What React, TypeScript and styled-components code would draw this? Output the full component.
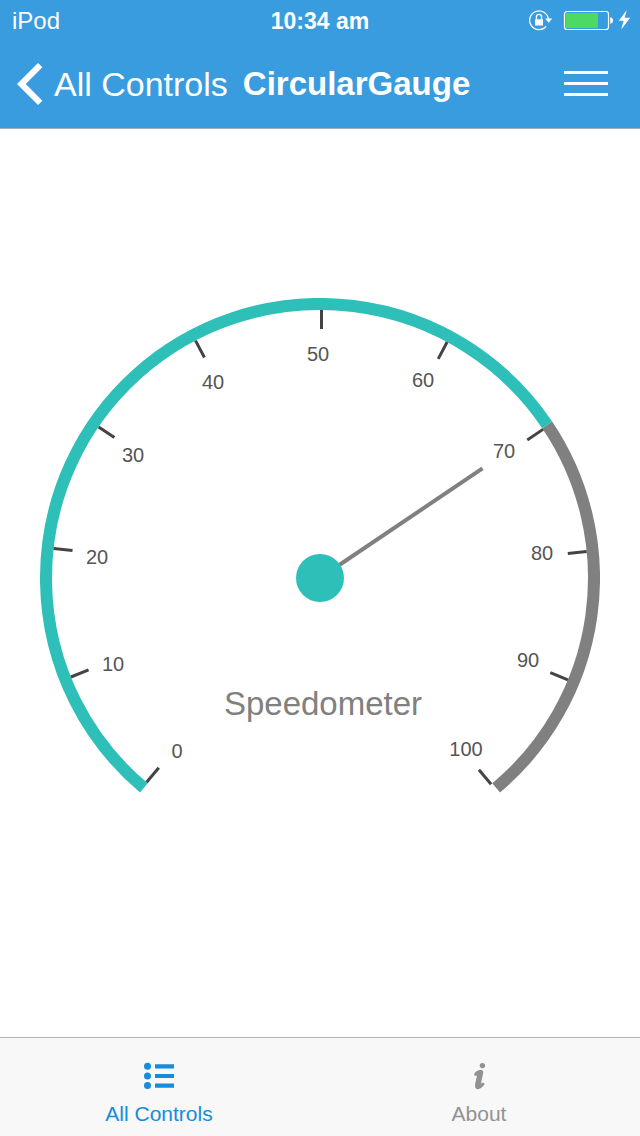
import React from 'react';
import styled, { createGlobalStyle } from 'styled-components';

const GlobalStyle = createGlobalStyle`
  * { box-sizing: border-box; }
  body {
    margin: 0;
    background: #fff;
    font-family: "Liberation Sans", Arial, sans-serif;
  }
`;

const Page = styled.div`
  min-height: 100vh;
  display: flex;
  flex-direction: column;
`;

const Header = styled.header`
  background: #389cdf;
  color: #fff;
  border-bottom: 1px solid #a6adb2;
`;

const StatusBar = styled.div`
  display: grid;
  grid-template-columns: 1fr auto 1fr;
  align-items: center;
  height: 40px;
  padding: 2px 8px 0;
  font-size: 24px;
  line-height: 28px;
`;

const Device = styled.span`
  padding-left: 4px;
`;

const Clock = styled.time`
  font-size: 23px;
  font-weight: bold;
`;

const StatusIcons = styled.div`
  display: flex;
  justify-content: flex-end;
`;

const NavBar = styled.nav`
  display: flex;
  align-items: center;
  height: 88px;
  padding: 0 32px 0 16px;
`;

const BackButton = styled.button`
  display: flex;
  align-items: center;
  gap: 10px;
  padding: 0;
  border: 0;
  background: none;
  color: inherit;
  font: inherit;
  font-size: 34px;
  line-height: 44px;
  white-space: nowrap;
`;

const Title = styled.h1`
  flex: 1;
  margin: 0 0 0 15px;
  font-size: 33px;
  line-height: 44px;
  font-weight: bold;
`;

const MenuButton = styled.button`
  display: flex;
  flex-direction: column;
  gap: 8px;
  width: 44px;
  padding: 0 0 1px;
  border: 0;
  background: none;
`;

const MenuBar = styled.span`
  height: 3px;
  background: #fff;
`;

const Main = styled.main`
  flex: 1;
  display: flex;
  align-items: center;
  justify-content: center;
  padding: 0 40px 10px;
`;

const GaugeSvg = styled.svg`
  display: block;
  width: 100%;
  max-width: 720px;
`;

const GaugeLabel = styled.text`
  font-size: 20px;
  fill: #555;
  text-anchor: middle;
`;

const GaugeTitle = styled.text`
  font-size: 33px;
  fill: #808080;
  text-anchor: middle;
`;

const TabBar = styled.nav`
  display: grid;
  grid-template-columns: 1fr 1fr;
  height: 99px;
  background: #f8f8f8;
  border-top: 1px solid #b2b2b2;
`;

const Tab = styled.button<{ $active?: boolean }>`
  display: flex;
  flex-direction: column;
  align-items: center;
  gap: 10px;
  padding: 24px 2px 0 0;
  border: 0;
  background: none;
  color: ${(p) => (p.$active ? '#158cdc' : '#929292')};
  font: inherit;
  font-size: 21px;
  line-height: 24px;
`;

const START = 130;
const SWEEP = 280;
const RADIUS = 274;
const TEAL = '#2dbfb8';
const GRAY = '#808080';

const angleOf = (value: number) => START + (SWEEP * value) / 100;

const pointAt = (value: number, radius: number) => {
  const rad = (angleOf(value) * Math.PI) / 180;
  return `${radius * Math.cos(rad)} ${radius * Math.sin(rad)}`;
};

const arc = (from: number, to: number) => {
  const large = ((to - from) * SWEEP) / 100 > 180 ? 1 : 0;
  return `M${pointAt(from, RADIUS)} A${RADIUS} ${RADIUS} 0 ${large} 1 ${pointAt(to, RADIUS)}`;
};

const scale = [
  { value: 0, x: -143, y: 180 },
  { value: 10, x: -207, y: 93 },
  { value: 20, x: -223, y: -14 },
  { value: 30, x: -187, y: -116 },
  { value: 40, x: -107, y: -189 },
  { value: 50, x: -2, y: -217 },
  { value: 60, x: 103, y: -191 },
  { value: 70, x: 184, y: -120 },
  { value: 80, x: 222, y: -18 },
  { value: 90, x: 208, y: 89 },
  { value: 100, x: 146, y: 178 },
];

function CircularGauge({ value, title }: { value: number; title: string }) {
  return (
    <GaugeSvg viewBox="-280 -280 560 560" role="img" aria-label={`${title}: ${value}`}>
      <path d={arc(value, 100)} fill="none" stroke={GRAY} strokeWidth="12" />
      <path d={arc(0, value)} fill="none" stroke={TEAL} strokeWidth="12" />
      {scale.map((s) => (
        <g key={s.value}>
          <rect x="249" y="0" width="19" height="3" fill="#444" transform={`rotate(${angleOf(s.value)})`} />
          <GaugeLabel x={s.x} y={s.y}>{s.value}</GaugeLabel>
        </g>
      ))}
      <rect x="0" y="-2" width="196" height="4" fill={GRAY} transform={`rotate(${angleOf(value)})`} />
      <circle r="24" fill={TEAL} />
      <GaugeTitle x="3" y="137">{title}</GaugeTitle>
    </GaugeSvg>
  );
}

export default function App() {
  return (
    <Page>
      <GlobalStyle />
      <Header>
        <StatusBar>
          <Device>iPod</Device>
          <Clock>10:34 am</Clock>
          <StatusIcons>
            <svg width="104" height="24" viewBox="0 0 104 24" aria-hidden="true">
              <path d="M18.2 17.4A9.4 9.4 0 1 1 20.4 10.2" fill="none" stroke="#fff" strokeWidth="1.3" />
              <path d="M17.2 9.6H24.2L20.7 13.8Z" fill="#fff" />
              <rect x="7" y="10.2" width="8" height="6.2" rx="0.5" fill="#fff" />
              <path d="M8.4 10.5V8a2.6 2.6 0 0 1 5.2 0V10.5" fill="none" stroke="#fff" strokeWidth="1.3" />
              <rect x="36.5" y="2.5" width="44" height="18" rx="2.5" fill="none" stroke="#fff" strokeWidth="1.2" />
              <rect x="38" y="4" width="32" height="15" fill="#4cd964" />
              <path d="M82.2 8.2q2.8.6 2.8 3.3t-2.8 3.3z" fill="#fff" />
              <path d="M98.8 1L90.8 11.8h4.8L93.2 20.6 102.2 8.8H96.6Z" fill="#fff" />
            </svg>
          </StatusIcons>
        </StatusBar>
        <NavBar>
          <BackButton type="button">
            <svg width="28" height="44" viewBox="0 0 28 44" aria-hidden="true">
              <path d="M1 22L22 1L26.4 5.2L9.8 22L26.4 38.8L22 43Z" fill="#fff" />
            </svg>
            All Controls
          </BackButton>
          <Title>CircularGauge</Title>
          <MenuButton type="button" aria-label="Menu">
            <MenuBar />
            <MenuBar />
            <MenuBar />
          </MenuButton>
        </NavBar>
      </Header>
      <Main>
        <CircularGauge value={70} title="Speedometer" />
      </Main>
      <TabBar>
        <Tab type="button" $active>
          <svg width="30" height="30" viewBox="0 0 30 30" fill="currentColor" aria-hidden="true">
            <circle cx="3.5" cy="4.3" r="3.5" />
            <circle cx="3.5" cy="14" r="3.5" />
            <circle cx="3.5" cy="23.6" r="3.5" />
            <path d="M11 2.2h19v4.2H11zM11 11.9h19v4.2H11zM11 21.6h19v4.2H11z" />
          </svg>
          All Controls
        </Tab>
        <Tab type="button">
          <svg width="30" height="30" viewBox="0 0 30 30" fill="currentColor" aria-hidden="true">
            <circle cx="18.4" cy="3.6" r="2.7" />
            <path d="M18.4 8.4C15.6 7.2 10.6 9.8 10.2 12.4C10 13.8 11.4 14.2 13 13.4L11.2 21.8C10.4 25.8 12 27.8 14.8 27C17.2 26.2 19.8 23.8 20.4 22.2C20.8 20.8 19.2 20.2 18 21L17 21.4L19.2 11C19.4 9.8 19.2 8.8 18.4 8.4Z" />
          </svg>
          About
        </Tab>
      </TabBar>
    </Page>
  );
}
